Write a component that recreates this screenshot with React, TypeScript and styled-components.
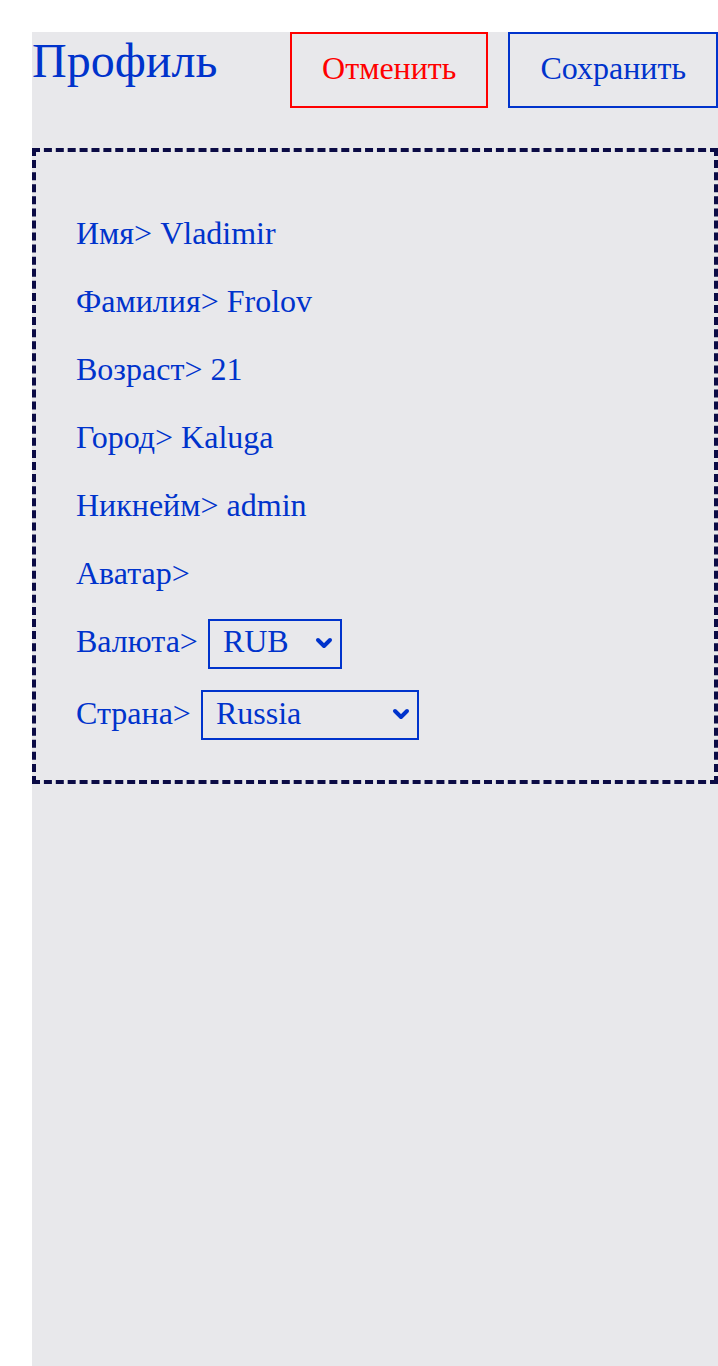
import * as React from "react";
import styled, { createGlobalStyle, css } from "styled-components";

const GlobalStyle = createGlobalStyle`
  html, body {
    margin: 0;
    background: #ffffff;
    font-family: "Liberation Serif", "Times New Roman", serif;
  }
`;

const Page = styled.div`
  box-sizing: border-box;
  min-height: 100vh;
  padding: 32px 0 0 32px;
  display: flex;
`;

const Panel = styled.main`
  flex: 1;
  background-color: #e8e8eb;
  color: #0033cc;
`;

const Header = styled.header`
  display: flex;
  justify-content: space-between;
  align-items: flex-start;
`;

const Title = styled.h1`
  margin: 0;
  font-size: 48px;
  font-weight: normal;
  line-height: 58px;
`;

const Actions = styled.div`
  display: flex;
  gap: 20px;
`;

const Button = styled.button<{ $tone: "danger" | "primary" }>`
  box-sizing: border-box;
  height: 76px;
  padding: 0 30px 5px;
  background: transparent;
  font-family: inherit;
  font-size: 32px;
  line-height: 36px;
  cursor: pointer;
  ${(p) =>
    p.$tone === "danger"
      ? css`
          border: 2px solid #ff0000;
          color: #ff0000;
        `
      : css`
          border: 2px solid #0033cc;
          color: #0033cc;
        `}
`;

const Card = styled.section`
  margin-top: 40px;
  border: 4px dashed #0b0b45;
  padding: 57px 40px 40px;
  display: flex;
  flex-direction: column;
  gap: 20px;
`;

const Row = styled.div`
  display: flex;
  align-items: baseline;
  gap: 10px;
  font-size: 32px;
  line-height: 48px;
`;

const SelectWrap = styled.div`
  position: relative;
  display: inline-flex;
`;

const Select = styled.select<{ $width: number }>`
  appearance: none;
  box-sizing: border-box;
  width: ${(p) => p.$width}px;
  height: 50px;
  margin: 0;
  padding: 0 0 5px 13px;
  border: 2px solid #0033cc;
  border-radius: 0;
  background: transparent;
  color: #0033cc;
  font-family: inherit;
  font-size: 32px;
  line-height: 36px;
`;

const Chevron = styled.svg`
  position: absolute;
  right: 9px;
  top: 18px;
  width: 18px;
  height: 12px;
  pointer-events: none;
`;

function Dropdown(props: { width: number; value: string; options: string[] }) {
  return (
    <SelectWrap>
      <Select $width={props.width} defaultValue={props.value}>
        {props.options.map((o) => (
          <option key={o}>{o}</option>
        ))}
      </Select>
      <Chevron viewBox="0 0 18 12">
        <path
          d="M3 3 L9 9 L15 3"
          fill="none"
          stroke="#0033cc"
          strokeWidth="4"
          strokeLinecap="round"
          strokeLinejoin="round"
        />
      </Chevron>
    </SelectWrap>
  );
}

const fields: [string, string][] = [
  ["Имя", "Vladimir"],
  ["Фамилия", "Frolov"],
  ["Возраст", "21"],
  ["Город", "Kaluga"],
  ["Никнейм", "admin"],
  ["Аватар", ""],
];

export default function App() {
  return (
    <Page>
      <GlobalStyle />
      <Panel>
        <Header>
          <Title>Профиль</Title>
          <Actions>
            <Button $tone="danger">Отменить</Button>
            <Button $tone="primary">Сохранить</Button>
          </Actions>
        </Header>
        <Card>
          {fields.map(([label, value]) => (
            <Row key={label}>
              <span>
                {label}&gt; {value}
              </span>
            </Row>
          ))}
          <Row>
            <span>Валюта&gt;</span>
            <Dropdown width={134} value="RUB" options={["RUB", "USD", "EUR"]} />
          </Row>
          <Row>
            <span>Страна&gt;</span>
            <Dropdown
              width={218}
              value="Russia"
              options={["Russia", "Belarus", "Kazakhstan"]}
            />
          </Row>
        </Card>
      </Panel>
    </Page>
  );
}
